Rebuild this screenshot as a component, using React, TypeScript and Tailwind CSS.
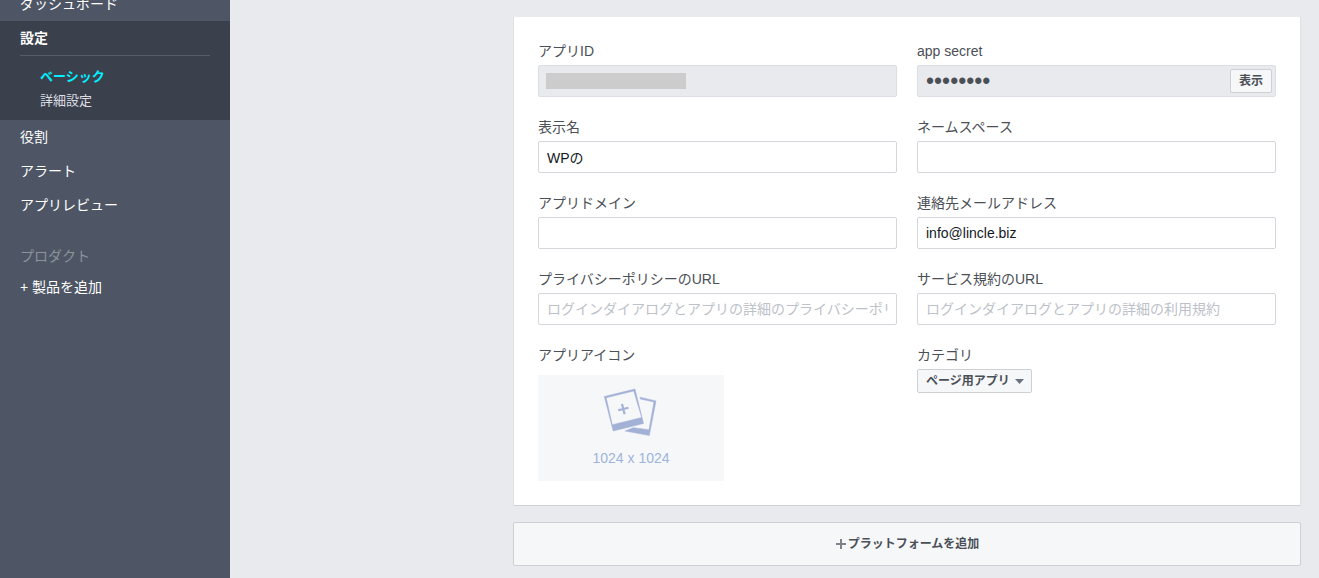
import { useState, type ReactNode } from "react";

interface FieldProps {
  id: string;
  label: string;
  children: ReactNode;
}

const inputClass =
  "block h-8 w-full rounded-xs border border-[#d3d6db] bg-white px-2 text-sm text-[#141823] outline-none placeholder:text-[#bdc1c9] focus:border-[#8b9dc3]";

const disabledInputClass =
  "block h-8 w-full rounded-xs border border-[#dcdee3] bg-[#e9eaed] px-2 text-[#4b4f56] outline-none";

function Field({ id, label, children }: FieldProps) {
  return (
    <div>
      <label htmlFor={id} className="mb-1 block text-sm leading-5 text-[#4b4f56]">
        {label}
      </label>
      {children}
    </div>
  );
}

function NavItem({ children }: { children: ReactNode }) {
  return (
    <a href="#" className="block px-5 text-sm leading-[34px] text-white">
      {children}
    </a>
  );
}

function Sidebar() {
  return (
    <nav className="w-[230px] shrink-0 overflow-hidden bg-[#4e5665]">
      {/* The list is scrolled slightly under the top edge */}
      <div className="-mt-[13px]">
        <NavItem>ダッシュボード</NavItem>
        <div className="bg-[#3b404d] pb-[7px]">
          <a href="#" className="mx-5 block border-b border-[#565c69] text-sm font-bold leading-[34px] text-white">
            設定
          </a>
          <div className="pl-10 pt-[9px] text-[13px] leading-6">
            <a href="#" className="block font-bold text-[#00f0ff]">
              ベーシック
            </a>
            <a href="#" className="block text-[#dcdee3]">
              詳細設定
            </a>
          </div>
        </div>
        <NavItem>役割</NavItem>
        <NavItem>アラート</NavItem>
        <NavItem>アプリレビュー</NavItem>
        <h2 className="mt-6 px-5 pb-1 text-sm leading-5 text-[#8d929b]">プロダクト</h2>
        <NavItem>+ 製品を追加</NavItem>
      </div>
    </nav>
  );
}

function PhotosIcon() {
  return (
    <svg
      width="54"
      height="48"
      viewBox="1 0 54 48"
      fill="#a3b1d6"
      stroke="#a3b1d6"
      strokeWidth="0.5"
      aria-hidden="true"
    >
      <path
        fillRule="evenodd"
        d="M1.300 8.500 32 1l8.500 34.500-30.300 7.500zM3.200 9.800 9.300 36.700 38.700 29.500 30.700 3z"
      />
      <path d="M37 9.200 53 12.900l-6.700 34.600L22 43l8.300-3.300 15.700 2L50.900 14 37.300 11z" />
      <path d="M15.200 22.300l10.300-2.600M19 15.900l2.600 10.300" strokeWidth="2.200" />
    </svg>
  );
}

export default function App() {
  const [name, setName] = useState("WPの");
  const [namespace, setNamespace] = useState("");
  const [domain, setDomain] = useState("");
  const [email, setEmail] = useState("info@lincle.biz");

  return (
    <div className="flex min-h-screen bg-[#e9eaed] font-['Liberation_Sans','Noto_Sans_CJK_JP',sans-serif]">
      <Sidebar />

      <main className="min-w-0 flex-1 pb-3 pl-[283px] pr-[18px] pt-4">
        <section className="grid grid-cols-2 gap-5 rounded-xs border border-t-[#e9eaed] border-x-[#dfe0e4] border-b-[#cfd0d4] bg-white p-6">
          <Field id="app-id" label="アプリID">
            <div className="relative">
              <input id="app-id" readOnly className={`${disabledInputClass} text-sm`} />
              <span className="absolute left-2 top-2 h-4 w-[140px] bg-[#cccccc]" />
            </div>
          </Field>
          <Field id="app-secret" label="app secret">
            <div className="relative">
              <input
                id="app-secret"
                type="password"
                readOnly
                value="********"
                className={`${disabledInputClass} text-[23px]`}
              />
              <button
                type="button"
                className="absolute right-1 top-1 h-6 rounded-xs border border-[#ced0d4] bg-[#f6f7f9] px-2 text-xs font-bold leading-none text-[#4b4f56]"
              >
                表示
              </button>
            </div>
          </Field>

          <Field id="name" label="表示名">
            <input id="name" value={name} onChange={(e) => setName(e.target.value)} className={inputClass} />
          </Field>
          <Field id="namespace" label="ネームスペース">
            <input
              id="namespace"
              value={namespace}
              onChange={(e) => setNamespace(e.target.value)}
              className={inputClass}
            />
          </Field>

          <Field id="domain" label="アプリドメイン">
            <input id="domain" value={domain} onChange={(e) => setDomain(e.target.value)} className={inputClass} />
          </Field>
          <Field id="email" label="連絡先メールアドレス">
            <input
              id="email"
              type="email"
              value={email}
              onChange={(e) => setEmail(e.target.value)}
              className={inputClass}
            />
          </Field>

          <Field id="privacy" label="プライバシーポリシーのURL">
            <input
              id="privacy"
              type="url"
              placeholder="ログインダイアログとアプリの詳細のプライバシーポリシー"
              className={inputClass}
            />
          </Field>
          <Field id="terms" label="サービス規約のURL">
            <input
              id="terms"
              type="url"
              placeholder="ログインダイアログとアプリの詳細の利用規約"
              className={inputClass}
            />
          </Field>

          <Field id="icon" label="アプリアイコン">
            <button
              id="icon"
              type="button"
              className="mt-[10px] flex w-[186px] flex-col items-center gap-3 bg-[#f6f7f9] py-[13px] text-sm leading-5 text-[#9db4dc]"
            >
              <PhotosIcon />
              1024 x 1024
            </button>
          </Field>
          <Field id="category" label="カテゴリ">
            <div className="relative w-fit">
              <select
                id="category"
                className="block h-6 appearance-none rounded-xs border border-[#ced0d4] bg-[#f6f7f9] pl-2 pr-5 text-xs font-bold text-[#4b4f56] outline-none"
              >
                <option>ページ用アプリ</option>
              </select>
              <svg
                width="9"
                height="5"
                viewBox="0 0 9 5"
                className="pointer-events-none absolute right-2 top-[10px]"
                fill="#6a7180"
                aria-hidden="true"
              >
                <path d="M0 0h9L4.500 5z" />
              </svg>
            </div>
          </Field>
        </section>

        {/* Add platform */}
        <button
          type="button"
          className="mt-4 flex h-11 w-full items-center justify-center gap-px rounded-xs border border-[#ced0d4] bg-[#f6f7f9] text-xs font-bold text-[#4b4f56]"
        >
          <svg width="12" height="12" viewBox="0 0 12 12" stroke="#7f8289" strokeWidth="2" aria-hidden="true">
            <path d="M6 1v10M1 6h10" />
          </svg>
          プラットフォームを追加
        </button>
      </main>
    </div>
  );
}
